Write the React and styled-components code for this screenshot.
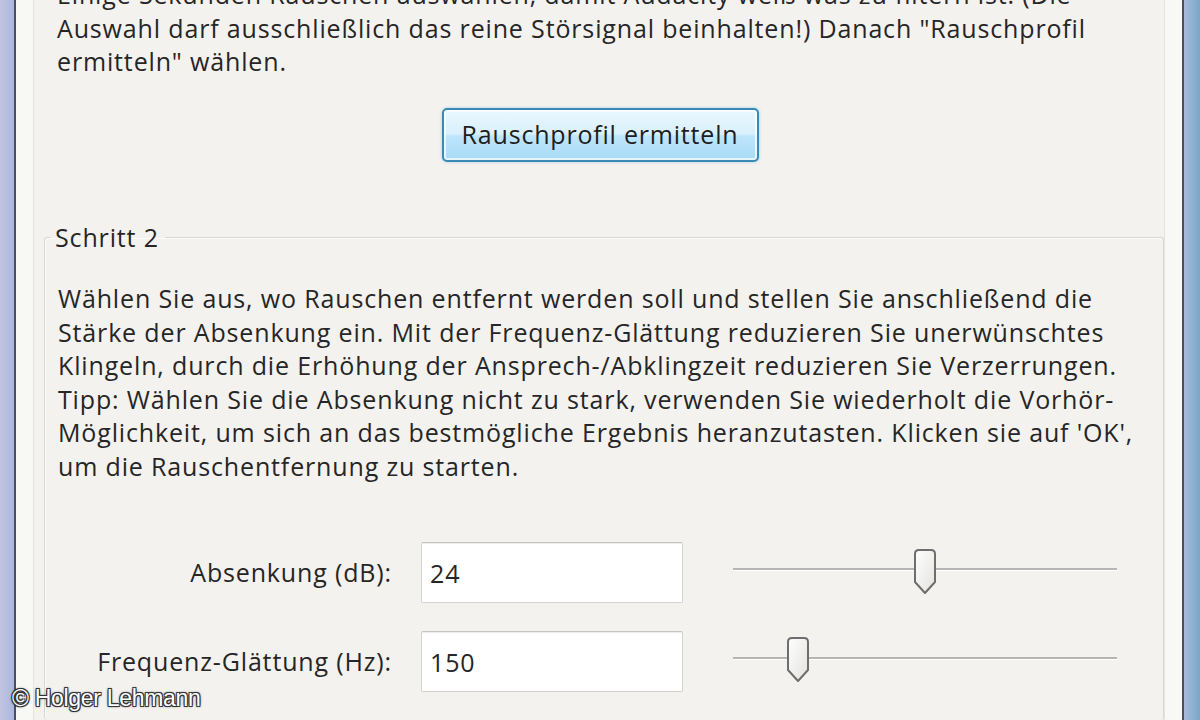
import styled, { createGlobalStyle } from 'styled-components';

const GlobalStyle = createGlobalStyle`
  html, body {
    margin: 0;
    padding: 0;
    background: #f4f2ef;
    overflow: hidden;
  }
  body {
    font-family: 'Open Sans', 'Noto Sans', sans-serif;
    color: #262626;
  }
`;

const Window = styled.div`
  position: relative;
  display: flex;
  width: 1200px;
  height: 720px;
  overflow: hidden;
`;

const FrameGlass = styled.div`
  width: ${p => p.w}px;
  flex: none;
  background: ${p => p.right
    ? 'linear-gradient(90deg, #aab8dc 0%, #8fb2d2 50%, #79a6c8 100%)'
    : 'linear-gradient(90deg, #c3c4e0 0%, #b4bde0 60%, #a9b7df 100%)'};
`;

const FrameLine = styled.div`
  width: 2px;
  flex: none;
  background: #4b4d62;
`;

const FrameInner = styled.div`
  width: ${p => p.w}px;
  flex: none;
  background: #f8f8f5;
  border-${p => p.right ? 'left' : 'right'}: 1px solid #e4e4e0;
`;

const Content = styled.div`
  flex: 1;
  display: flex;
  flex-direction: column;
  padding: 0 0 0 10px;
  background: #f4f2ef;
`;

const Text = styled.p`
  margin: 0;
  padding-left: 13px;
  font-size: 25px;
  letter-spacing: 0.85px;
  line-height: 33.5px;
  white-space: nowrap;
`;

const TopText = styled(Text)`
  margin-top: -22px;
`;

const ButtonRow = styled.div`
  display: flex;
  justify-content: center;
  margin: 29px 0 0 -8px;
`;

const Button = styled.button`
  width: 317px;
  height: 54px;
  font-family: inherit;
  font-size: 25px;
  letter-spacing: 0.8px;
  color: #1e1e1e;
  border: 2px solid #3a8ab8;
  border-radius: 5px;
  background: linear-gradient(180deg, #eaf7fe 0%, #d9f0fc 48%, #bee6fb 52%, #a8daf6 100%);
  box-shadow: inset 0 0 0 2px rgba(255,255,255,0.7), 0 0 3px rgba(80,170,220,0.5);
  padding: 0 0 2px;
`;

const Group = styled.fieldset`
  margin: 59px 0 0 0;
  padding: 28px 0 0 0;
  border: 1px solid #d8d7d2;
  border-radius: 3px;
  border-bottom: none;
  flex: 1;
  box-shadow: inset 1px 1px 0 #fbfbf9;
`;

const Legend = styled.legend`
  margin-left: 6px;
  padding: 0 6px 0 4px;
  font-size: 25px;
  letter-spacing: 0.85px;
  line-height: 33.5px;
`;

const Params = styled.div`
  display: flex;
  flex-direction: column;
  gap: 28px;
  margin-top: 59px;
`;

const ParamRow = styled.div`
  display: flex;
  align-items: center;
  gap: 29px;
`;

const Label = styled.label`
  flex: 0 0 347px;
  text-align: right;
  font-size: 25px;
  letter-spacing: 0.85px;
  line-height: 33.5px;
  white-space: nowrap;
`;

const Input = styled.div`
  flex: 0 0 262px;
  height: 61px;
  box-sizing: border-box;
  border: 1px solid #d2d2d0;
  border-top-color: #c4c4c2;
  border-radius: 2px;
  background: #fff;
  box-shadow: inset 0 1px 0 #eeeeec;
  padding: 0 8px;
  display: flex;
  align-items: center;
  font-size: 25px;
  letter-spacing: 0.85px;
`;

const SliderTrack = styled.div`
  position: relative;
  flex: 0 0 384px;
  margin-left: 21px;
  height: 61px;
  &::before {
    content: '';
    position: absolute;
    left: 0;
    right: 0;
    top: 26px;
    height: 2px;
    background: #b5b5b3;
    border-bottom: 1px solid #ffffff;
  }
`;

const Thumb = styled.svg`
  position: absolute;
  top: ${p => p.top}px;
  width: 26px;
  height: 48px;
`;

const Watermark = styled.div`
  position: absolute;
  left: 12px;
  bottom: 8px;
  font-family: 'Liberation Sans', Arial, sans-serif;
  font-size: 23px;
  color: #ffffff;
  text-shadow: -1px -1px 0 #333, 1px -1px 0 #333, -1px 1px 0 #333, 1px 1px 0 #333, 0 0 3px #000;
  letter-spacing: -0.3px;
`;

function Slider({ pos, top }) {
  return (
    <SliderTrack>
      <Thumb top={top} viewBox="0 0 26 48" style={{ left: `calc(${pos * 100}% - 13px)` }}>
        <defs>
          <linearGradient id="tg" x1="0" y1="0" x2="1" y2="1">
            <stop offset="0" stopColor="#ffffff" />
            <stop offset="1" stopColor="#e2e2e0" />
          </linearGradient>
        </defs>
        <path
          d="M3 6 Q3 2 7 2 L19 2 Q23 2 23 6 L23 34 L13 45 L3 34 Z"
          fill="url(#tg)"
          stroke="#6e6e6e"
          strokeWidth="2"
          strokeLinejoin="round"
        />
      </Thumb>
    </SliderTrack>
  );
}

export default function App() {
  return (
    <Window>
      <GlobalStyle />
      <FrameGlass w={14} />
      <FrameLine />
      <FrameInner w={17} />
      <Content>
        <TopText>
          Einige Sekunden Rauschen auswählen, damit Audacity weiß was zu filtern ist! (Die<br />
          Auswahl darf ausschließlich das reine Störsignal beinhalten!) Danach "Rauschprofil<br />
          ermitteln" wählen.
        </TopText>
        <ButtonRow>
          <Button>Rauschprofil ermitteln</Button>
        </ButtonRow>
        <Group>
          <Legend>Schritt 2</Legend>
          <Text>
            Wählen Sie aus, wo Rauschen entfernt werden soll und stellen Sie anschließend die<br />
            Stärke der Absenkung ein. Mit der Frequenz-Glättung reduzieren Sie unerwünschtes<br />
            Klingeln, durch die Erhöhung der Ansprech-/Abklingzeit reduzieren Sie Verzerrungen.<br />
            Tipp: Wählen Sie die Absenkung nicht zu stark, verwenden Sie wiederholt die Vorhör-<br />
            Möglichkeit, um sich an das bestmögliche Ergebnis heranzutasten. Klicken sie auf 'OK',<br />
            um die Rauschentfernung zu starten.
          </Text>
          <Params>
            <ParamRow>
              <Label>Absenkung (dB):</Label>
              <Input>24</Input>
              <Slider pos={0.5} top={6} />
            </ParamRow>
            <ParamRow>
              <Label>Frequenz-Glättung (Hz):</Label>
              <Input>150</Input>
              <Slider pos={0.17} top={5} />
            </ParamRow>
          </Params>
        </Group>
      </Content>
      <FrameInner w={17} right />
      <FrameLine />
      <FrameGlass w={16} right />
      <Watermark>© Holger Lehmann</Watermark>
    </Window>
  );
}
